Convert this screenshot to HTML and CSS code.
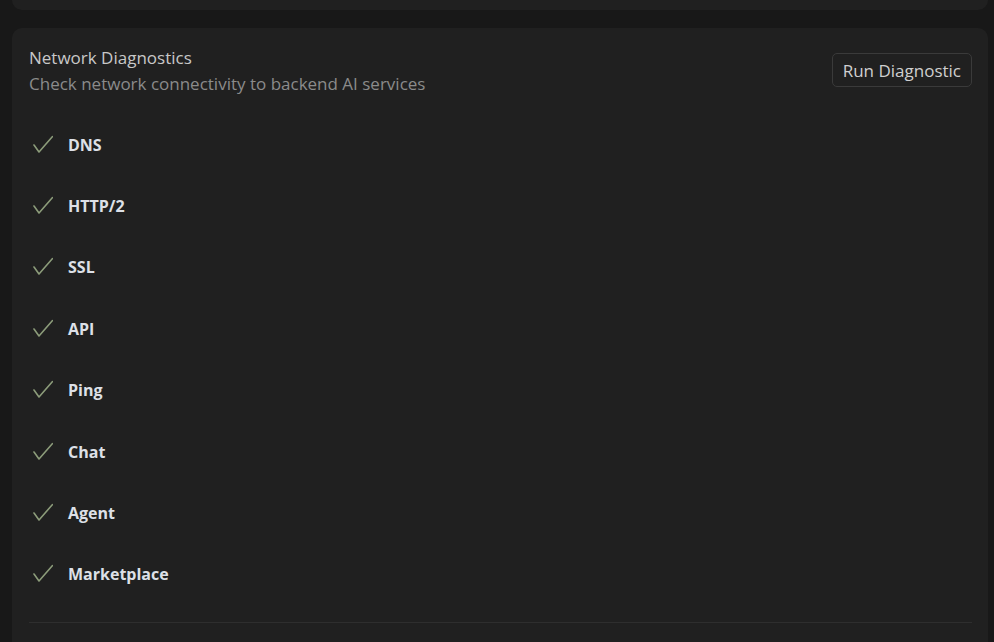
FILE: index.html
```html
<!DOCTYPE html>
<html lang="en">
<head>
<meta charset="utf-8">
<title>Network Diagnostics</title>
<link rel="stylesheet" href="styles.css">
</head>
<body>
<div class="page">
  <div class="card card-prev"></div>
  <section class="card">
    <header class="card-head">
      <div class="head-text">
        <h2 class="title">Network Diagnostics</h2>
        <p class="subtitle">Check network connectivity to backend AI services</p>
      </div>
      <button class="btn">Run Diagnostic</button>
    </header>
    <ul class="checks">
      <li class="check-row"><svg class="tick" viewBox="0 0 20 20"><polyline points="1,10 6,17 19.3,1.7"/></svg><span class="label">DNS</span></li>
      <li class="check-row"><svg class="tick" viewBox="0 0 20 20"><polyline points="1,10 6,17 19.3,1.7"/></svg><span class="label">HTTP/2</span></li>
      <li class="check-row"><svg class="tick" viewBox="0 0 20 20"><polyline points="1,10 6,17 19.3,1.7"/></svg><span class="label">SSL</span></li>
      <li class="check-row"><svg class="tick" viewBox="0 0 20 20"><polyline points="1,10 6,17 19.3,1.7"/></svg><span class="label">API</span></li>
      <li class="check-row"><svg class="tick" viewBox="0 0 20 20"><polyline points="1,10 6,17 19.3,1.7"/></svg><span class="label">Ping</span></li>
      <li class="check-row"><svg class="tick" viewBox="0 0 20 20"><polyline points="1,10 6,17 19.3,1.7"/></svg><span class="label">Chat</span></li>
      <li class="check-row"><svg class="tick" viewBox="0 0 20 20"><polyline points="1,10 6,17 19.3,1.7"/></svg><span class="label">Agent</span></li>
      <li class="check-row"><svg class="tick" viewBox="0 0 20 20"><polyline points="1,10 6,17 19.3,1.7"/></svg><span class="label">Marketplace</span></li>
    </ul>
    <div class="divider"></div>
    <div class="card-foot"></div>
  </section>
</div>
</body>
</html>
```
FILE: styles.css
```css
html, body {
  margin: 0;
  padding: 0;
  background: #181818;
  height: 100%;
  overflow: hidden;
}
body {
  font-family: "Open Sans", "Noto Sans", "Liberation Sans", sans-serif;
  color: #cccccc;
}
.page {
  display: flex;
  flex-direction: column;
  gap: 18px;
  padding: 0 6px 0 12px;
}
.card {
  background: #202020;
  border-radius: 10px;
  padding: 18px 16px 0 17px;
}
.card-prev {
  height: 40px;
  margin-top: -30px;
  padding: 0;
}
.card-head {
  display: flex;
  justify-content: space-between;
  align-items: flex-start;
}
.title {
  margin: 0;
  font-size: 17px;
  font-weight: 400;
  line-height: 24px;
  color: #c8c8c8;
}
.subtitle {
  margin: 2px 0 0;
  font-size: 17px;
  line-height: 24px;
  color: #8b8b8b;
}
.btn {
  margin-top: 7px;
  height: 34px;
  padding: 0 10px;
  background: #202020;
  border: 1px solid #3a3a3a;
  border-radius: 5px;
  color: #cfcfcf;
  font-family: inherit;
  font-size: 17px;
}
.checks {
  list-style: none;
  margin: 30px 0 0;
  padding: 0 0 0 4px;
  display: flex;
  flex-direction: column;
  gap: 24px;
}
.check-row {
  display: flex;
  align-items: center;
  height: 37.4px;
  gap: 15px;
}
.tick {
  width: 20px;
  height: 20px;
  fill: none;
  stroke: #8c9c7a;
  stroke-width: 1.6;
  stroke-linecap: round;
  stroke-linejoin: round;
}
.label {
  font-size: 16px;
  font-weight: 700;
  color: #dde0e7;
}
.divider {
  margin-top: 29px;
  height: 1px;
  background: #2e2e2e;
}
.card-foot {
  height: 40px;
}
```
